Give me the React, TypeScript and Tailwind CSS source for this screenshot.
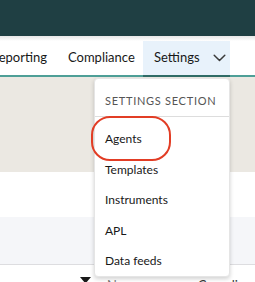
import React from "react";

export default function App() {
  const font = { fontFamily: 'Lato, "Open Sans", sans-serif' };
  return (
    <div className="relative w-[255px] h-[282px] overflow-hidden bg-white text-[#181818]" style={font}>
      <div className="h-[36px] bg-[#1f3f43]" />
      <div className="h-[5px] bg-gradient-to-b from-[#e6e6e6] to-white" />
      <div className="flex h-[34px] items-stretch text-[13px] text-[#181818]">
        <div className="-ml-[9px] flex w-[77px] shrink-0 items-center">Reporting</div>
        <div className="flex w-[75px] shrink-0 items-center">Compliance</div>
        <div className="flex items-center w-[87px] shrink-0 bg-[#e8f2fb] pl-[11px]">
          <span>Settings</span>
          <svg className="ml-[13px]" width="13" height="8" viewBox="0 0 13 8" fill="none">
            <path d="M1.2 1.3 L6.5 6.5 L11.8 1.3" stroke="#3a3a3a" strokeWidth="1.5" strokeLinecap="round" strokeLinejoin="round" />
          </svg>
        </div>
      </div>
      <div className="flex h-[2px]">
        <div className="w-[143px] bg-[#4e9f97]" />
        <div className="w-[87px] bg-[#2f6b66]" />
        <div className="flex-1 bg-[#4e9f97]" />
      </div>
      <div className="h-[95px] bg-[#ebe8e2]" />
      <div className="h-[45px] bg-white" />
      <div className="h-[48px] bg-[#f5f6f9] border-b border-[#dddde0]" />
      <div className="flex items-start h-[20px] pt-[11px] text-[13px]">
        <svg className="ml-[80px] mt-[1px] shrink-0" width="11" height="7" viewBox="0 0 11 7">
          <path d="M0 0 H11 L5.5 6.5 Z" fill="#1a1a1a" />
        </svg>
        <span className="ml-[16px] text-[#777]">Name</span>
        <span className="ml-[57px] text-[#333]">Compliance</span>
      </div>

      <div className="absolute left-[94px] top-[78px] w-[136px] h-[199px] rounded-[4px] bg-white shadow-[0_2px_4px_rgba(0,0,0,0.18)] border border-[#e5e5e5]">
        <div className="h-[37px] flex items-end pb-[7px] pl-[10px] text-[11px] tracking-[0.065em] text-[#555]">SETTINGS SECTION</div>
        <div className="border-t border-[#dddddd]" />
        <div className="flex flex-col text-[12px] text-[#181818] pl-[10px]">
          <div className="h-[30.5px] flex items-center mt-[7px]">Agents</div>
          <div className="h-[30.5px] flex items-center">Templates</div>
          <div className="h-[30.5px] flex items-center">Instruments</div>
          <div className="h-[30.5px] flex items-center">APL</div>
          <div className="h-[30.5px] flex items-center">Data feeds</div>
        </div>
      </div>
      <div className="absolute left-[91px] top-[116px] w-[80px] h-[45px] rounded-[19px] border-2 border-[#e23d25]" />
    </div>
  );
}
